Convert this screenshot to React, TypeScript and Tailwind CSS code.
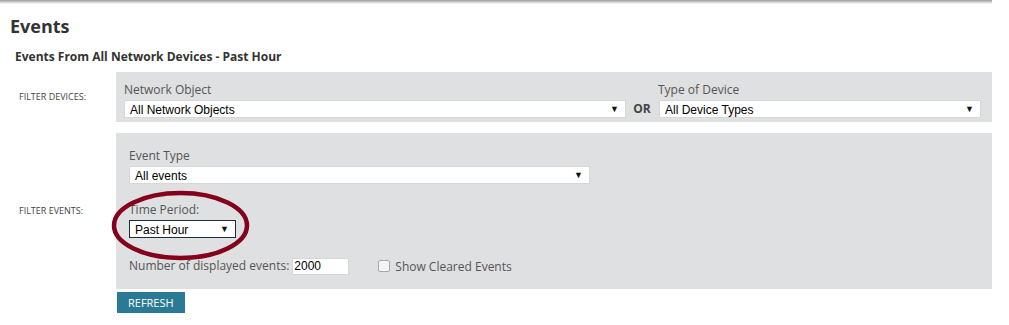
import React from 'react';

interface FakeSelectProps {
  value: string;
  className?: string;
  dark?: boolean;
}

const SANS = "font-['Open_Sans',sans-serif]";
const ARIAL = "font-['Liberation_Sans',Arial,sans-serif]";

function FakeSelect({ value, className = '', dark = false }: FakeSelectProps) {
  return (
    <div
      className={`flex items-center justify-between bg-white h-[18px] pl-[5px] pr-[6px] text-[12px] text-black ${ARIAL} border ${
        dark ? 'border-[#1e2d3d]' : 'border-[#d6d7d9]'
      } ${className}`}
    >
      <span className="leading-none pt-[1px]">{value}</span>
      <span className="text-[9px] leading-none text-[#111]">▼</span>
    </div>
  );
}

function FieldLabel({ children }: { children: React.ReactNode }) {
  return <div className={`${SANS} text-[12px] leading-[16px] text-[#555]`}>{children}</div>;
}

function SideLabel({ children }: { children: React.ReactNode }) {
  return (
    <div className={`w-[116px] shrink-0 pl-[19px] ${SANS} text-[9px] uppercase text-[#444]`}>
      {children}
    </div>
  );
}

export default function App() {
  return (
    <div className="w-[1009px] h-[325px] bg-white overflow-hidden">
      <div className="w-[992px] h-[4px] bg-gradient-to-b from-[#9a9a9a] to-white" />

      <div className="w-[992px]">
        <h1 className={`${SANS} font-bold text-[18px] leading-[24px] text-[#333] pl-[10px] mt-[10px]`}>
          Events
        </h1>
        <h2 className={`${SANS} font-bold text-[12px] leading-[16px] text-[#333] pl-[15px] mt-[11px]`}>
          Events From All Network Devices - Past Hour
        </h2>

        <div className="flex items-center mt-[7px]">
          <SideLabel>Filter Devices:</SideLabel>
          <div className="flex-1 h-[50px] bg-[#dfe0e2] flex items-end pl-[8px] pr-[11px] pb-[4px]">
            <div className="flex flex-col w-[502px]">
              <FieldLabel>Network Object</FieldLabel>
              <FakeSelect value="All Network Objects" className="mt-[2px]" />
            </div>
            <div className={`w-[32px] h-[18px] flex items-center justify-center ${SANS} font-bold text-[12px] text-[#444]`}>
              OR
            </div>
            <div className="flex flex-col flex-1">
              <FieldLabel>Type of Device</FieldLabel>
              <FakeSelect value="All Device Types" className="mt-[2px] ml-[1px]" />
            </div>
          </div>
        </div>

        <div className="flex items-center mt-[11px]">
          <SideLabel>Filter Events:</SideLabel>
          <div className="relative flex-1 h-[156px] bg-[#dfe0e2] pl-[13px] pt-[15px]">
            <FieldLabel>Event Type</FieldLabel>
            <FakeSelect value="All events" className="mt-[2px] w-[461px]" />

            <div className="mt-[18px]">
              <FieldLabel>Time Period:</FieldLabel>
            </div>
            <FakeSelect value="Past Hour" dark className="mt-[2px] w-[107px]" />

            <div className="flex items-center mt-[18px]">
              <span className={`${SANS} text-[12px] text-[#555]`}>Number of displayed events:</span>
              <div className={`ml-[3px] w-[57px] h-[17px] bg-white border border-[#d6d7d9] flex items-center pl-[1px] ${ARIAL} text-[12px] text-black`}>
                2000
              </div>
              <div className="ml-[29px] w-[12px] h-[12px] rounded-[2px] border border-[#a9a9a9] bg-[#f4f4f4]" />
              <span className={`ml-[5px] mt-[2px] ${SANS} text-[12px] text-[#555]`}>Show Cleared Events</span>
            </div>

            <svg
              className="absolute left-[-5px] top-[57px] pointer-events-none"
              width="139"
              height="71"
              viewBox="0 0 139 71"
            >
              <ellipse cx="69.5" cy="35.5" rx="66.5" ry="32.5" fill="none" stroke="#85001a" strokeWidth="4.5" />
            </svg>
          </div>
        </div>

        <div className="flex pl-[117px] mt-[3px]">
          <button className={`h-[21px] px-[11px] bg-[#2b7a95] text-white ${SANS} text-[11px] leading-[21px] uppercase`}>
            Refresh
          </button>
        </div>
      </div>
    </div>
  );
}
